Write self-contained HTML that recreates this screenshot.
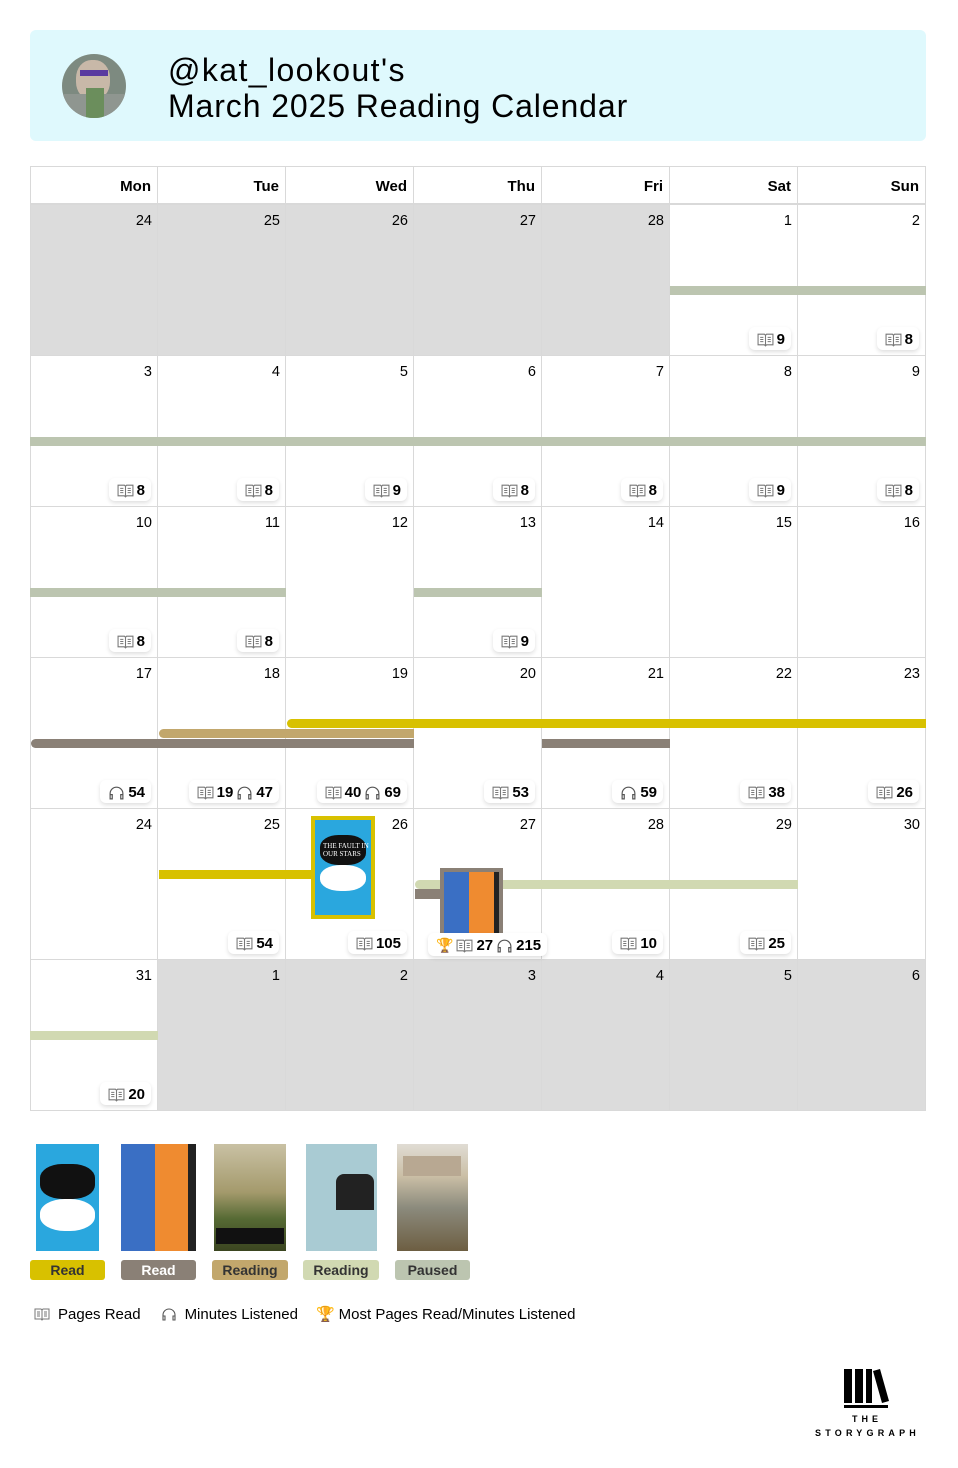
<!DOCTYPE html>
<html><head><meta charset="utf-8">
<style>
*{margin:0;padding:0;box-sizing:border-box}
body{width:958px;height:1468px;background:#fff;font-family:"Liberation Sans",sans-serif;color:#000;position:relative;overflow:hidden}
.hdr{position:absolute;left:30px;top:30px;width:896px;height:111px;background:#dff9fd;border-radius:6px}
.av{position:absolute;left:62px;top:54px;width:64px;height:64px;border-radius:50%;overflow:hidden;background:#7d8a80}
.t1{position:absolute;left:168px;top:52px;font-size:32px;letter-spacing:1.4px}
.t2{position:absolute;left:168px;top:88px;font-size:32px;letter-spacing:0.9px}
.c{position:absolute;width:128px;height:151px;border-right:1px solid #d9d9d9;border-bottom:1px solid #d9d9d9}
.g{background:#dcdcdc}
.n{position:absolute;right:5px;top:8px;font-size:14.5px}
.h{position:absolute;top:166px;height:39px;width:128px;border-right:1px solid #d9d9d9;border-top:1px solid #d9d9d9;border-bottom:2px solid #d9d9d9;font-weight:bold;font-size:15px;text-align:right;padding:11px 6px 0 0}
.p{position:absolute;right:6px;bottom:5px;background:#fff;border-radius:6px;box-shadow:0 2px 4px rgba(0,0,0,.13);font-weight:bold;font-size:15px;height:23px;padding:2px 6px 0 8px;white-space:nowrap;display:flex;align-items:center;gap:3px}
.p svg{width:17px;height:15px}
.b{position:absolute;height:9px}
.lg{position:absolute;top:1260px;height:20px;border-radius:3px;font-weight:bold;font-size:14px;text-align:center;line-height:20px;color:#333}
.cov{position:absolute;top:1144px;height:107px}
</style></head><body>
<svg width="0" height="0" style="position:absolute">
<defs>
<symbol id="bk" viewBox="0 0 16 14"><path d="M1 2h6l1 1 1-1h6v10H9l-1 1-1-1H1z M8 3v9 M3 5h3M3 7h3M3 9h3M10 5h3M10 7h3M10 9h3" fill="none" stroke="#777" stroke-width="1"/></symbol>
<symbol id="hp" viewBox="0 0 16 14"><path d="M2 12V8a6 6 0 0 1 12 0v4 M2 9h2v4H2z M12 9h2v4h-2z" fill="none" stroke="#555" stroke-width="1.1"/></symbol>
</defs></svg>
<div class="hdr"></div>
<div class="av"><div style="position:absolute;left:14px;top:6px;width:34px;height:40px;background:#c8b8a8;border-radius:45%"></div><div style="position:absolute;left:18px;top:16px;width:28px;height:6px;background:#5a3aa0"></div><div style="position:absolute;left:0;top:40px;width:64px;height:30px;background:#8f9690"></div><div style="position:absolute;left:24px;top:34px;width:18px;height:30px;background:#6b8e5c"></div></div>
<div class="t1">@kat_lookout's</div>
<div class="t2">March 2025 Reading Calendar</div>

<div class="h" style="left:30px;border-left:1px solid #d9d9d9">Mon</div>
<div class="h" style="left:158px">Tue</div>
<div class="h" style="left:286px">Wed</div>
<div class="h" style="left:414px">Thu</div>
<div class="h" style="left:542px">Fri</div>
<div class="h" style="left:670px">Sat</div>
<div class="h" style="left:798px">Sun</div>

<div class="c g" style="left:30px;top:205px;border-left:1px solid #d9d9d9"><span class="n">24</span></div>
<div class="c g" style="left:158px;top:205px"><span class="n">25</span></div>
<div class="c g" style="left:286px;top:205px"><span class="n">26</span></div>
<div class="c g" style="left:414px;top:205px"><span class="n">27</span></div>
<div class="c g" style="left:542px;top:205px"><span class="n">28</span></div>
<div class="c" style="left:670px;top:205px"><span class="n">1</span><div class="p"><svg><use href="#bk"/></svg>9</div></div>
<div class="c" style="left:798px;top:205px"><span class="n">2</span><div class="p"><svg><use href="#bk"/></svg>8</div></div>
<div class="c" style="left:30px;top:356px;border-left:1px solid #d9d9d9"><span class="n">3</span><div class="p"><svg><use href="#bk"/></svg>8</div></div>
<div class="c" style="left:158px;top:356px"><span class="n">4</span><div class="p"><svg><use href="#bk"/></svg>8</div></div>
<div class="c" style="left:286px;top:356px"><span class="n">5</span><div class="p"><svg><use href="#bk"/></svg>9</div></div>
<div class="c" style="left:414px;top:356px"><span class="n">6</span><div class="p"><svg><use href="#bk"/></svg>8</div></div>
<div class="c" style="left:542px;top:356px"><span class="n">7</span><div class="p"><svg><use href="#bk"/></svg>8</div></div>
<div class="c" style="left:670px;top:356px"><span class="n">8</span><div class="p"><svg><use href="#bk"/></svg>9</div></div>
<div class="c" style="left:798px;top:356px"><span class="n">9</span><div class="p"><svg><use href="#bk"/></svg>8</div></div>
<div class="c" style="left:30px;top:507px;border-left:1px solid #d9d9d9"><span class="n">10</span><div class="p"><svg><use href="#bk"/></svg>8</div></div>
<div class="c" style="left:158px;top:507px"><span class="n">11</span><div class="p"><svg><use href="#bk"/></svg>8</div></div>
<div class="c" style="left:286px;top:507px"><span class="n">12</span></div>
<div class="c" style="left:414px;top:507px"><span class="n">13</span><div class="p"><svg><use href="#bk"/></svg>9</div></div>
<div class="c" style="left:542px;top:507px"><span class="n">14</span></div>
<div class="c" style="left:670px;top:507px"><span class="n">15</span></div>
<div class="c" style="left:798px;top:507px"><span class="n">16</span></div>
<div class="c" style="left:30px;top:658px;border-left:1px solid #d9d9d9"><span class="n">17</span><div class="p"><svg><use href="#hp"/></svg>54</div></div>
<div class="c" style="left:158px;top:658px"><span class="n">18</span><div class="p"><svg><use href="#bk"/></svg>19 <svg><use href="#hp"/></svg>47</div></div>
<div class="c" style="left:286px;top:658px"><span class="n">19</span><div class="p"><svg><use href="#bk"/></svg>40 <svg><use href="#hp"/></svg>69</div></div>
<div class="c" style="left:414px;top:658px"><span class="n">20</span><div class="p"><svg><use href="#bk"/></svg>53</div></div>
<div class="c" style="left:542px;top:658px"><span class="n">21</span><div class="p"><svg><use href="#hp"/></svg>59</div></div>
<div class="c" style="left:670px;top:658px"><span class="n">22</span><div class="p"><svg><use href="#bk"/></svg>38</div></div>
<div class="c" style="left:798px;top:658px"><span class="n">23</span><div class="p"><svg><use href="#bk"/></svg>26</div></div>
<div class="c" style="left:30px;top:809px;border-left:1px solid #d9d9d9"><span class="n">24</span></div>
<div class="c" style="left:158px;top:809px"><span class="n">25</span><div class="p"><svg><use href="#bk"/></svg>54</div></div>
<div class="c" style="left:286px;top:809px"><span class="n">26</span><div class="p"><svg><use href="#bk"/></svg>105</div></div>
<div class="c" style="left:414px;top:809px"><span class="n">27</span></div>
<div class="c" style="left:542px;top:809px"><span class="n">28</span><div class="p"><svg><use href="#bk"/></svg>10</div></div>
<div class="c" style="left:670px;top:809px"><span class="n">29</span><div class="p"><svg><use href="#bk"/></svg>25</div></div>
<div class="c" style="left:798px;top:809px"><span class="n">30</span></div>
<div class="c" style="left:30px;top:960px;border-left:1px solid #d9d9d9"><span class="n">31</span><div class="p"><svg><use href="#bk"/></svg>20</div></div>
<div class="c g" style="left:158px;top:960px"><span class="n">1</span></div>
<div class="c g" style="left:286px;top:960px"><span class="n">2</span></div>
<div class="c g" style="left:414px;top:960px"><span class="n">3</span></div>
<div class="c g" style="left:542px;top:960px"><span class="n">4</span></div>
<div class="c g" style="left:670px;top:960px"><span class="n">5</span></div>
<div class="c g" style="left:798px;top:960px"><span class="n">6</span></div>

<div class="b" style="left:670px;top:286px;width:256px;background:#bcc5b0"></div>
<div class="b" style="left:30px;top:437px;width:896px;background:#bcc5b0"></div>
<div class="b" style="left:30px;top:588px;width:256px;background:#bcc5b0"></div>
<div class="b" style="left:414px;top:588px;width:128px;background:#bcc5b0"></div>
<div class="b" style="left:287px;top:719px;width:639px;background:#d8c100;border-radius:5px 0 0 5px"></div>
<div class="b" style="left:159px;top:729px;width:255px;background:#c2a76c;border-radius:5px 0 0 5px"></div>
<div class="b" style="left:31px;top:739px;width:383px;background:#8a8076;border-radius:5px 0 0 5px"></div>
<div class="b" style="left:542px;top:739px;width:128px;background:#8a8076"></div>
<div class="b" style="left:159px;top:870px;width:155px;background:#d8c100"></div>
<div class="b" style="left:415px;top:880px;width:383px;background:#d1d9b2;border-radius:5px 0 0 5px"></div>
<div class="b" style="left:415px;top:889px;width:28px;height:10px;background:#8a8076"></div>
<div class="b" style="left:30px;top:1031px;width:128px;background:#d1d9b2"></div>

<div style="position:absolute;left:311px;top:816px;width:64px;height:103px;background:#d8c100;padding:4px">
<div style="width:100%;height:100%;background:#2aa7de;position:relative">
<div style="position:absolute;left:5px;top:15px;width:46px;height:30px;background:#111;border-radius:40%"></div>
<div style="position:absolute;left:5px;top:45px;width:46px;height:26px;background:#fff;border-radius:45%"></div>
<div style="position:absolute;left:8px;top:22px;font-size:7px;color:#fff;font-family:'Liberation Serif',serif">THE FAULT IN OUR STARS</div>
</div></div>
<div style="position:absolute;left:440px;top:868px;width:63px;height:68px;background:#8a8076;padding:4px 4px 0 4px">
<div style="width:100%;height:100%;display:flex"><div style="flex:1;background:#3a6fc4"></div><div style="flex:1;background:#ef8b30"></div><div style="width:5px;background:#222"></div></div></div>
<div class="p" style="left:428px;right:auto;top:933px;bottom:auto"><span style="color:#e08a00;font-size:14px">🏆</span><svg><use href="#bk"/></svg>27 <svg><use href="#hp"/></svg>215</div>

<div class="cov" style="left:36px;width:63px;background:#2aa7de"><div style="position:absolute;left:4px;top:20px;width:55px;height:35px;background:#111;border-radius:40%"></div><div style="position:absolute;left:4px;top:55px;width:55px;height:32px;background:#fff;border-radius:45%"></div></div>
<div class="cov" style="left:121px;width:75px;display:flex"><div style="flex:1;background:#3a6fc4"></div><div style="flex:1;background:#ef8b30"></div><div style="width:8px;background:#222"></div></div>
<div class="cov" style="left:214px;width:72px;background:linear-gradient(#c9c1a4,#a49a6c 45%,#566a34 70%,#3b4520)"><div style="position:absolute;left:2px;top:84px;width:68px;height:16px;background:#111"></div></div>
<div class="cov" style="left:306px;width:71px;background:#a9cbd3"><div style="position:absolute;left:30px;top:30px;width:38px;height:36px;background:#222;border-radius:8px 8px 0 0"></div></div>
<div class="cov" style="left:397px;width:71px;background:linear-gradient(#e0dcd4,#cbbfa6 30%,#8b8a7c 60%,#6d5e42)"><div style="position:absolute;left:6px;top:12px;width:58px;height:20px;background:#b8a892"></div></div>

<div class="lg" style="left:30px;width:75px;background:#d8c100">Read</div>
<div class="lg" style="left:121px;width:75px;background:#8a8076;color:#fff">Read</div>
<div class="lg" style="left:212px;width:76px;background:#c2a76c">Reading</div>
<div class="lg" style="left:303px;width:76px;background:#d1d9b2">Reading</div>
<div class="lg" style="left:395px;width:75px;background:#bcc5b0">Paused</div>

<div style="position:absolute;left:34px;top:1305px;font-size:15px;display:flex;align-items:center;gap:4px;white-space:nowrap">
<svg width="16" height="14"><use href="#bk"/></svg><span style="margin-left:4px">Pages Read</span>
<svg width="16" height="14" style="margin-left:16px"><use href="#hp"/></svg><span style="margin-left:4px">Minutes Listened</span>
<span style="margin-left:14px;color:#e08a00">🏆</span><span>Most Pages Read/Minutes Listened</span></div>

<svg style="position:absolute;left:840px;top:1367px" width="52" height="44" viewBox="0 0 52 44">
<rect x="4" y="2" width="8" height="34" fill="#000"/><rect x="15" y="2" width="8" height="34" fill="#000"/><rect x="26" y="2" width="6" height="34" fill="#000"/>
<polygon points="33,4 40,2 49,34 42,36" fill="#000"/><rect x="4" y="38" width="44" height="3" fill="#000"/></svg>
<div style="position:absolute;left:852px;top:1414px;font-size:9px;font-weight:bold;letter-spacing:4px">THE</div>
<div style="position:absolute;left:815px;top:1428px;font-size:9px;font-weight:bold;letter-spacing:4.2px">STORYGRAPH</div>
</body></html>
